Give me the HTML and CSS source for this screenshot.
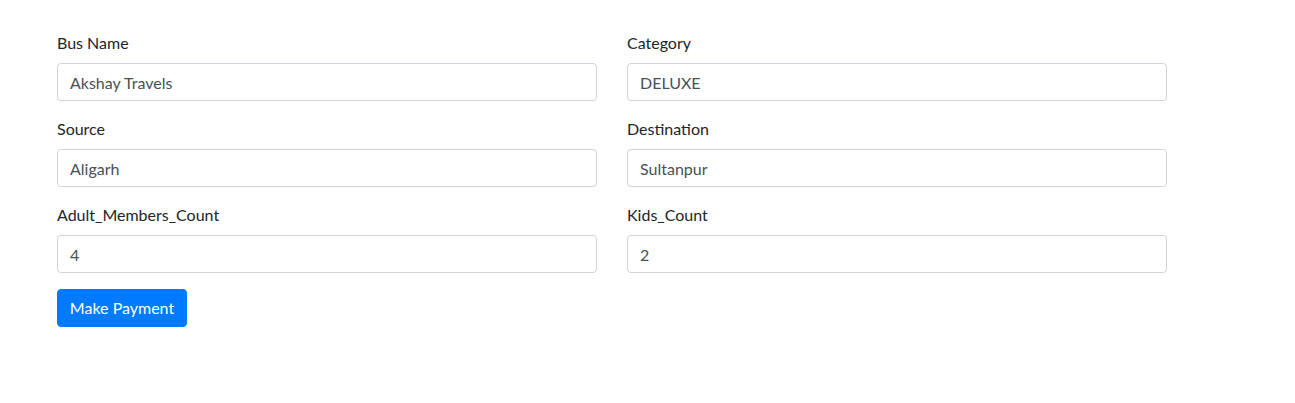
FILE: index.html
```html
<!DOCTYPE html>
<html>
<head>
<meta charset="utf-8">
<link rel="stylesheet" href="styles.css">
</head>
<body>
<div class="page">
  <form class="form">
    <div class="row">
      <div class="group">
        <label class="label">Bus Name</label>
        <input class="control" type="text" value="Akshay Travels">
      </div>
      <div class="group">
        <label class="label">Category</label>
        <input class="control" type="text" value="DELUXE">
      </div>
    </div>
    <div class="row">
      <div class="group">
        <label class="label">Source</label>
        <input class="control" type="text" value="Aligarh">
      </div>
      <div class="group">
        <label class="label">Destination</label>
        <input class="control" type="text" value="Sultanpur">
      </div>
    </div>
    <div class="row">
      <div class="group">
        <label class="label">Adult_Members_Count</label>
        <input class="control" type="text" value="4">
      </div>
      <div class="group">
        <label class="label">Kids_Count</label>
        <input class="control" type="text" value="2">
      </div>
    </div>
    <button class="btn" type="button">Make Payment</button>
  </form>
</div>
</body>
</html>
```

FILE: styles.css
```css
* { box-sizing: border-box; }
body {
  margin: 0;
  font-family: "Lato", "Noto Sans", sans-serif;
  font-size: 16px;
  line-height: 24px;
  color: #212529;
  background: #fff;
}
.page {
  padding: 31px 0 0 57px;
  width: 1167px;
}
.form { display: flex; flex-direction: column; }
.row {
  display: flex;
  gap: 30px;
}
.group {
  flex: 0 0 540px;
  margin-bottom: 16px;
  display: flex;
  flex-direction: column;
}
.label {
  display: block;
  margin-bottom: 8px;
  line-height: 24px;
}
.control {
  display: block;
  width: 100%;
  height: 38px;
  padding: 6px 12px;
  font-family: inherit;
  font-size: 16px;
  line-height: 24px;
  color: #495057;
  background: #fff;
  border: 1px solid #ced4da;
  border-radius: 4px;
  outline: none;
}
.btn {
  align-self: flex-start;
  height: 38px;
  padding: 6px 0;
  font-family: inherit;
  font-size: 16px;
  line-height: 24px;
  color: #fff;
  background: #007bff;
  border: 1px solid #007bff;
  border-radius: 4px;
  width: 130px;
  white-space: nowrap;
  text-align: center;
}
```
